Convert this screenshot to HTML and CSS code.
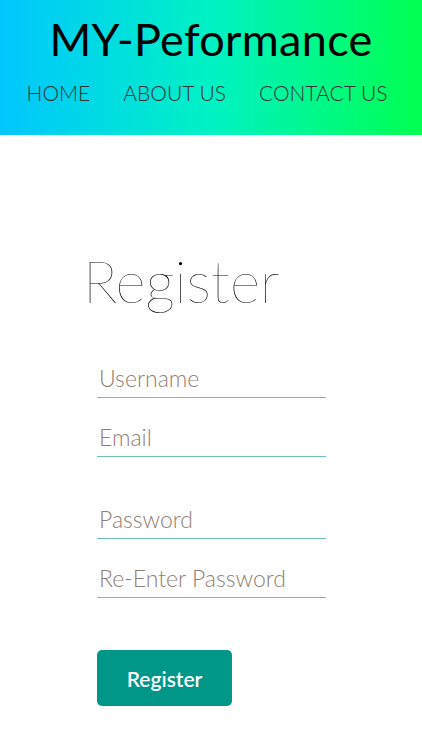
FILE: index.html
```html
<!DOCTYPE html>
<html>
<head>
<meta charset="utf-8">
<link rel="stylesheet" href="styles.css">
</head>
<body>
<header class="header">
  <h1 class="brand">MY-Peformance</h1>
  <nav class="nav">
    <a class="nav-link" href="#">HOME</a>
    <a class="nav-link" href="#">ABOUT US</a>
    <a class="nav-link" href="#">CONTACT US</a>
  </nav>
</header>
<main class="main">
  <h2 class="title">Register</h2>
  <form class="form">
    <div class="group">
      <input class="field" type="text" placeholder="Username">
      <input class="field" type="email" placeholder="Email">
    </div>
    <div class="group group-pw">
      <input class="field" type="password" placeholder="Password">
      <input class="field" type="password" placeholder="Re-Enter Password">
    </div>
    <button class="btn" type="button">Register</button>
  </form>
</main>
</body>
</html>
```
FILE: styles.css
```css
* { box-sizing: border-box; }
html, body { margin: 0; padding: 0; background: #fff; }
body { font-family: "Lato", "Liberation Sans", sans-serif; }

.header {
  height: 135px;
  background: linear-gradient(90deg, #00c6ff 0%, #00f2c4 50%, #00ff50 100%);
  display: flex;
  flex-direction: column;
  align-items: center;
  padding-top: 12px;
}
.brand {
  margin: 0;
  font-weight: 400;
  font-size: 45px;
  line-height: 54px;
  color: #000;
  letter-spacing: 0.3px;
}
.nav {
  display: flex;
  gap: 33px;
  margin-top: 14px;
  margin-right: 8px;
}
.nav-link {
  font-size: 21px;
  font-weight: 300;
  color: #333;
  text-decoration: none;
  line-height: 26px;
}

.main {
  padding-left: 83px;
  padding-top: 111px;
}
.title {
  margin: 0;
  font-size: 58px;
  font-weight: 200;
  line-height: 70px;
  color: #000;
}
.form {
  padding-left: 14px;
  margin-top: 50px;
  display: flex;
  flex-direction: column;
}
.group { display: flex; flex-direction: column; gap: 27px; }
.group-pw { margin-top: 50px; }
.field {
  width: 229px;
  height: 32px;
  border: none;
  border-bottom: 1px solid #6fbfbb;
  outline: none;
  font-family: inherit;
  font-size: 23px;
  font-weight: 300;
  padding: 0 2px 8px;
  background: transparent;
}
.field::placeholder { color: #8f7f74; }
.btn {
  margin-top: 52px;
  width: 135px;
  height: 56px;
  background: #009688;
  color: #fff;
  border: none;
  border-radius: 5px;
  font-family: inherit;
  font-size: 21px;
  font-weight: 600;
  align-self: flex-start;
}
```
